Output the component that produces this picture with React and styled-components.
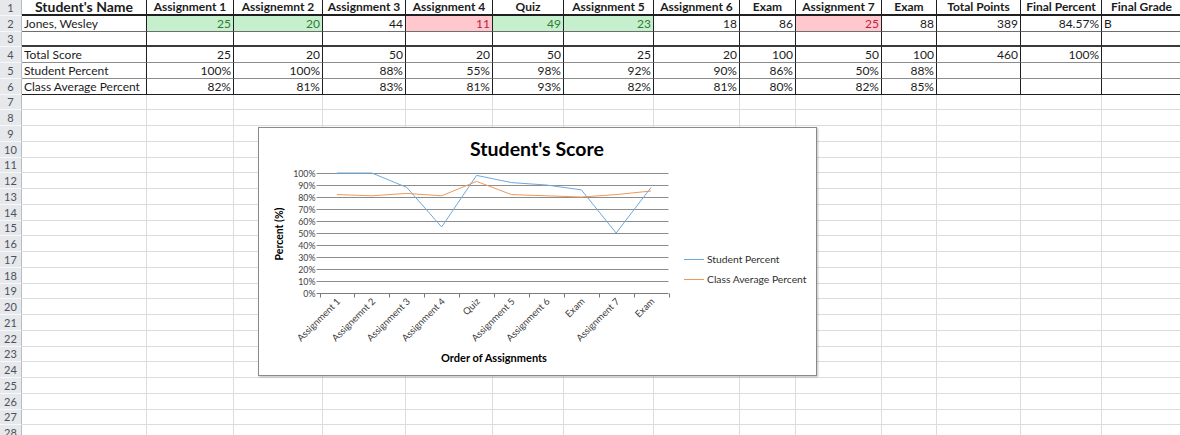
import React from 'react';
import styled, { createGlobalStyle } from 'styled-components';

const GlobalStyle = createGlobalStyle`
    body {
        margin: 0;
        overflow: hidden;
        background: #fff;
        font-family: Lato, 'Open Sans', sans-serif;
    }
`;

const colWidths = [22, 125, 87, 89, 83, 87, 71, 90, 86, 56, 86, 55, 84, 81, 80];
const ROWS = 28;

const headers = [
    "Student's Name",
    'Assignment 1',
    'Assignemnt 2',
    'Assignment 3',
    'Assignment 4',
    'Quiz',
    'Assignment 5',
    'Assignment 6',
    'Exam',
    'Assignment 7',
    'Exam',
    'Total Points',
    'Final Percent',
    'Final Grade',
];

const tableRows = {
    2: ['Jones, Wesley', '25', '20', '44', '11', '49', '23', '18', '86', '25', '88', '389', '84.57%', 'B'],
    3: ['', '', '', '', '', '', '', '', '', '', '', '', '', ''],
    4: ['Total Score', '25', '20', '50', '20', '50', '25', '20', '100', '50', '100', '460', '100%', ''],
    5: ['Student Percent', '100%', '100%', '88%', '55%', '98%', '92%', '90%', '86%', '50%', '88%', '', '', ''],
    6: ['Class Average Percent', '82%', '81%', '83%', '81%', '93%', '82%', '81%', '80%', '82%', '85%', '', '', ''],
};

// conditional formatting on the student's row
const rowTwoTones = ['', 'good', 'good', '', 'bad', 'good', 'good', '', '', 'bad', '', '', '', ''];

const tones = {
    good: { bg: '#c6efce', fg: '#2f7d32' },
    bad: { bg: '#ffc7ce', fg: '#c0223f' },
};

const rowRules = {
    1: '2px solid #1f1f1f',
    2: '1px solid #6e6e6e',
    3: '2px solid #3a3a3a',
    4: '1px solid #8c8c8c',
    5: '1px solid #8c8c8c',
    6: '1px solid #1f1f1f',
};

const Sheet = styled.div`
    position: relative;
    display: grid;
    grid-template-columns: ${colWidths.map(w => `${w}px`).join(' ')};
    grid-template-rows: repeat(${ROWS}, 15.75px);
    width: ${colWidths.reduce((a, b) => a + b, 0)}px;
    height: 435px;
    overflow: hidden;
`;

const RowNum = styled.div`
    box-sizing: border-box;
    display: flex;
    align-items: center;
    justify-content: center;
    background: #e6e8eb;
    border-right: 1px solid #b9bdc3;
    border-bottom: 1px solid #f7f8f9;
    color: #4b5160;
    font-size: 11px;
    line-height: 1;
`;

const Cell = styled.div`
    box-sizing: border-box;
    display: flex;
    align-items: center;
    justify-content: ${props =>
        props.$align === 'right'
            ? 'flex-end'
            : props.$align === 'center'
            ? 'center'
            : 'flex-start'};
    padding: 0 2px;
    min-width: 0;
    border-right: 1px solid ${props => (props.$table ? '#1f1f1f' : '#dadcdf')};
    border-bottom: ${props => props.$rule || '1px solid #dadcdf'};
    background: ${props => (props.$tone ? tones[props.$tone].bg : '#fff')};
    color: ${props => (props.$tone ? tones[props.$tone].fg : '#1c1c1c')};
    font-size: ${props => (props.$title ? '14px' : '12px')};
    font-weight: ${props => (props.$head ? 700 : 400)};
    line-height: 13px;
    white-space: nowrap;
    overflow: ${props => (props.$head ? 'visible' : 'hidden')};
`;

const ChartFrame = styled.div`
    position: absolute;
    left: 258px;
    top: 127px;
    width: 559px;
    height: 249px;
    box-sizing: border-box;
    background: #fff;
    border: 1px solid #8a8a8a;
    box-shadow: 1px 1px 2px rgba(0, 0, 0, 0.25);
`;

const ChartSvg = styled.svg`
    display: block;
    font-family: Lato, 'Open Sans', sans-serif;
`;

const categories = [
    'Assignment 1',
    'Assignemnt 2',
    'Assignment 3',
    'Assignment 4',
    'Quiz',
    'Assignment 5',
    'Assignment 6',
    'Exam',
    'Assignment 7',
    'Exam',
];
const studentPct = [100, 100, 88, 55, 98, 92, 90, 86, 50, 88];
const classPct = [82, 81, 83, 81, 93, 82, 81, 80, 82, 85];

const plot = { x0: 60.5, x1: 409.5, yTop: 45, yBottom: 165 };

const ScoreChart = () => {
    const step = (plot.x1 - plot.x0) / categories.length;
    const yOf = v => plot.yBottom - ((plot.yBottom - plot.yTop) * v) / 100;
    const xOf = i => plot.x0 + step * (i + 0.5);
    const points = data => data.map((v, i) => `${xOf(i)},${yOf(v)}`).join(' ');
    const ticks = Array.from({ length: 11 }, (_, i) => i * 10);

    return (
        <ChartSvg width="557" height="247" viewBox="0 0 557 247">
            <text x="278" y="28" textAnchor="middle" fontSize="19.5" fontWeight="700" fill="#000">
                Student's Score
            </text>

            {ticks.map(t => (
                <g key={t}>
                    <line
                        x1={plot.x0 - 3}
                        x2={plot.x1}
                        y1={Math.round(yOf(t)) + 0.5}
                        y2={Math.round(yOf(t)) + 0.5}
                        stroke={t === 0 ? '#7a7a7a' : '#8c8c8c'}
                        strokeWidth="1"
                    />
                    <text
                        x={plot.x0 - 4}
                        y={Math.round(yOf(t)) + 3.5}
                        textAnchor="end"
                        fontSize="8.8"
                        fill="#404040"
                    >
                        {t}%
                    </text>
                </g>
            ))}

            {Array.from({ length: categories.length + 1 }, (_, i) => (
                <line
                    key={i}
                    x1={Math.round(plot.x0 + step * i) + 0.5}
                    x2={Math.round(plot.x0 + step * i) + 0.5}
                    y1={plot.yBottom + 0.5}
                    y2={plot.yBottom + 4.5}
                    stroke="#7a7a7a"
                />
            ))}

            <text
                transform="translate(24 106) rotate(-90)"
                textAnchor="middle"
                fontSize="10.5"
                fontWeight="700"
                fill="#000"
            >
                Percent (%)
            </text>

            <polyline points={points(studentPct)} fill="none" stroke="#6fa8dc" strokeWidth="1" />
            <polyline points={points(classPct)} fill="none" stroke="#f0975a" strokeWidth="1" />

            {categories.map((c, i) => (
                <text
                    key={i}
                    transform={`translate(${xOf(i) + 4} ${plot.yBottom + 9}) rotate(-45)`}
                    textAnchor="end"
                    fontSize="9.5"
                    fill="#404040"
                >
                    {c}
                </text>
            ))}

            <text x="235" y="234" textAnchor="middle" fontSize="11" fontWeight="700" fill="#000">
                Order of Assignments
            </text>

            <line x1="425" x2="445" y1="131.5" y2="131.5" stroke="#6fa8dc" />
            <text x="448" y="135" fontSize="10.3" fill="#303030">
                Student Percent
            </text>
            <line x1="425" x2="445" y1="151.5" y2="151.5" stroke="#f0975a" />
            <text x="448" y="155" fontSize="10.3" fill="#303030">
                Class Average Percent
            </text>
        </ChartSvg>
    );
};

const App = () => {
    const rows = [];
    for (let r = 1; r <= ROWS; r++) {
        rows.push(<RowNum key={`n${r}`}>{r}</RowNum>);
        for (let c = 0; c < headers.length; c++) {
            const inTable = r <= 6;
            let text = '';
            let align = c === 0 || c === 13 ? 'left' : 'right';
            let tone = '';
            if (r === 1) {
                text = headers[c];
                align = 'center';
            } else if (inTable) {
                text = tableRows[r][c];
                if (r === 2) tone = rowTwoTones[c];
            }
            rows.push(
                <Cell
                    key={`${r}-${c}`}
                    $table={inTable}
                    $rule={inTable ? rowRules[r] : undefined}
                    $align={align}
                    $tone={tone || undefined}
                    $head={r === 1}
                    $title={r === 1 && c === 0}
                >
                    {text}
                </Cell>,
            );
        }
    }

    return (
        <>
            <GlobalStyle />
            <Sheet>
                {rows}
                <ChartFrame>
                    <ScoreChart />
                </ChartFrame>
            </Sheet>
        </>
    );
};

export default App;
